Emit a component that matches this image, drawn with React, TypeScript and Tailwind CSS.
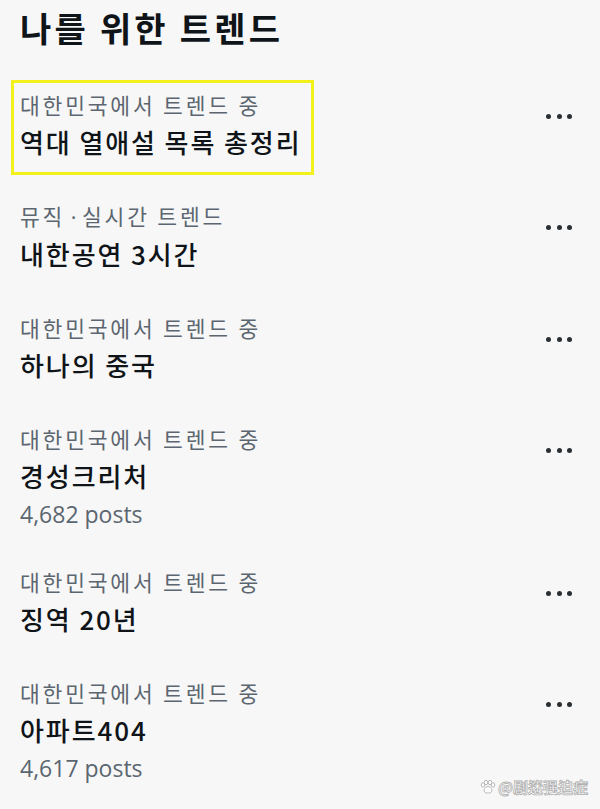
import React from "react";

type Item = { sub: React.ReactNode; title: string; posts?: string; boxed?: boolean };

const SUB = "대한민국에서 트렌드 중";

const items: Item[] = [
  { sub: SUB, title: "역대 열애설 목록 총정리", boxed: true },
  {
    sub: (
      <>
        뮤직<span className="font-['Open_Sans',sans-serif] tracking-normal"> · </span>실시간 트렌드
      </>
    ),
    title: "내한공연 3시간",
  },
  { sub: SUB, title: "하나의 중국" },
  { sub: SUB, title: "경성크리처", posts: "4,682 posts" },
  { sub: SUB, title: "징역 20년" },
  { sub: SUB, title: "아파트404", posts: "4,617 posts" },
];

const font = {
  fontFamily: '"Noto Sans CJK KR", "Noto Sans", sans-serif',
};

function Dots() {
  return (
    <div className="mt-[28px] flex w-[26px] items-center justify-between">
      <span className="h-[5px] w-[5px] rounded-full bg-[#2a2f33]" />
      <span className="h-[5px] w-[5px] rounded-full bg-[#2a2f33]" />
      <span className="h-[5px] w-[5px] rounded-full bg-[#2a2f33]" />
    </div>
  );
}

export default function App() {
  return (
    <div className="relative h-[809px] w-[600px] overflow-hidden bg-[#f7f7f7] font-['Noto_Sans_CJK_KR',sans-serif]">
      <div className="px-5 pt-[8px]">
        <h1 className="h-[40px] text-[34px] font-bold leading-[40px] tracking-[3.2px] text-[#0f1419]">
          나를 위한 트렌드
        </h1>
      </div>
      <div className="mt-[20px]">
        {items.map((it, i) => (
          <div key={i} className="flex items-start justify-between py-[18px] pl-5 pr-[28px]">
            <div className="relative">
              {it.boxed && (
                <div className="absolute left-[-9px] top-[-6px] h-[95px] w-[303px] border-[3px] border-[#f2f21a]" />
              )}
              <div className="text-[21.5px] leading-[37px] tracking-[2.8px] text-[#5b6670]">{it.sub}</div>
              <div className="text-[26px] font-medium leading-[38px] tracking-[1.9px] text-[#0f1419]">
                {it.title}
              </div>
              {it.posts && (
                <div className="mt-[6px] font-['Open_Sans',sans-serif] text-[23px] leading-[26px] text-[#5b6670]">
                  {it.posts}
                </div>
              )}
            </div>
            <Dots />
          </div>
        ))}
      </div>
      <div className="absolute bottom-[13px] right-[12px] flex items-center gap-[2px]">
        <svg width="16" height="14" viewBox="0 0 16 14">
          <g fill="#fff" stroke="#b8b8b8" strokeWidth="1">
            <ellipse cx="3" cy="5" rx="1.8" ry="2.2" />
            <ellipse cx="6" cy="2.5" rx="1.8" ry="2.2" />
            <ellipse cx="10" cy="2.5" rx="1.8" ry="2.2" />
            <ellipse cx="13" cy="5" rx="1.8" ry="2.2" />
            <path d="M8 6.5 C5 6.5 3.5 10 4.5 12 C5.5 13.5 10.5 13.5 11.5 12 C12.5 10 11 6.5 8 6.5Z" />
          </g>
        </svg>
        <span
          className="text-[15px] font-bold leading-[18px] text-white [-webkit-text-stroke:0.8px_#b0b0b0]"
          style={font}
        >
          @剧迷强迫症
        </span>
      </div>
    </div>
  );
}
